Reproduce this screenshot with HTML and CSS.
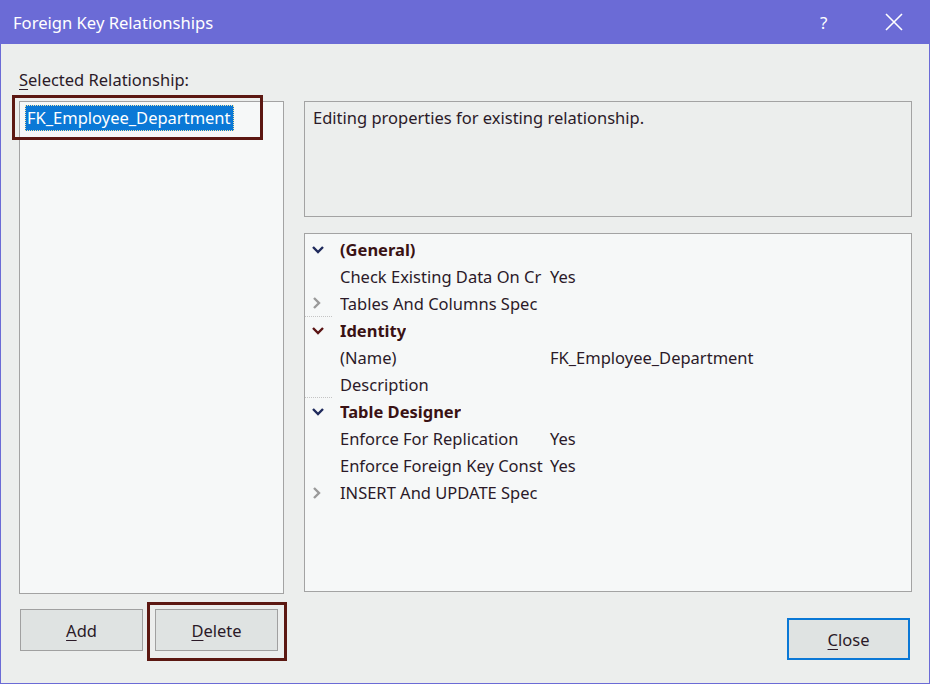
FILE: index.html
```html
<!DOCTYPE html>
<html>
<head>
<meta charset="utf-8">
<link rel="stylesheet" href="styles.css">
</head>
<body>
<div class="window">
  <div class="titlebar">
    <span class="title">Foreign Key Relationships</span>
    <span class="help">?</span>
    <span class="close-x">
      <svg width="18" height="18" viewBox="0 0 18 18"><path d="M1 1 L17 17 M17 1 L1 17" stroke="#fff" stroke-width="1.6" fill="none"/></svg>
    </span>
  </div>
  <div class="content">
    <div class="label"><u>S</u>elected Relationship:</div>
    <div class="spacer"></div>

    <div class="listbox">
      <div class="item selected">FK_Employee_Department</div>
    </div>
    <div class="right">
      <div class="desc">Editing properties for existing relationship.</div>
      <div class="grid">
        <div class="row cat"><span class="gut"><svg class="chev" width="14" height="10" viewBox="0 0 14 10"><path d="M2 2 L7 7 L12 2" stroke="#1f2a5c" stroke-width="2.4" fill="none"/></svg></span><span class="name">(General)</span></div>
        <div class="row"><span class="gut"></span><span class="name">Check Existing Data On Cr</span><span class="val">Yes</span></div>
        <div class="row"><span class="gut sep"><svg class="chev" width="10" height="14" viewBox="0 0 10 14"><path d="M3 2 L8 7 L3 12" stroke="#9a9a9a" stroke-width="2.4" fill="none"/></svg></span><span class="name">Tables And Columns Spec</span><span class="val"></span></div>
        <div class="row cat"><span class="gut"><svg class="chev" width="14" height="10" viewBox="0 0 14 10"><path d="M2 2 L7 7 L12 2" stroke="#5a1414" stroke-width="2.4" fill="none"/></svg></span><span class="name">Identity</span></div>
        <div class="row"><span class="gut"></span><span class="name">(Name)</span><span class="val">FK_Employee_Department</span></div>
        <div class="row"><span class="gut sep"></span><span class="name">Description</span><span class="val"></span></div>
        <div class="row cat"><span class="gut"><svg class="chev" width="14" height="10" viewBox="0 0 14 10"><path d="M2 2 L7 7 L12 2" stroke="#1f2a5c" stroke-width="2.4" fill="none"/></svg></span><span class="name">Table Designer</span></div>
        <div class="row"><span class="gut"></span><span class="name">Enforce For Replication</span><span class="val">Yes</span></div>
        <div class="row"><span class="gut"></span><span class="name">Enforce Foreign Key Const</span><span class="val">Yes</span></div>
        <div class="row"><span class="gut"><svg class="chev" width="10" height="14" viewBox="0 0 10 14"><path d="M3 2 L8 7 L3 12" stroke="#9a9a9a" stroke-width="2.4" fill="none"/></svg></span><span class="name">INSERT And UPDATE Spec</span><span class="val"></span></div>
      </div>
    </div>

    <div class="buttons">
      <button class="btn"><u>A</u>dd</button>
      <button class="btn"><u>D</u>elete</button>
    </div>
    <div class="close-row">
      <button class="btn default"><u>C</u>lose</button>
    </div>
  </div>
  <div class="mark mark-list"></div>
  <div class="mark mark-delete"></div>
</div>
</body>
</html>
```
FILE: styles.css
```css
* { box-sizing: border-box; }
html, body { margin: 0; padding: 0; }
body {
  width: 930px;
  height: 684px;
  font-family: "Noto Sans", "Open Sans", sans-serif;
  font-size: 16.5px;
  color: #2b1a28;
  background: #eceeed;
  overflow: hidden;
}
.window {
  position: relative;
  width: 930px;
  height: 684px;
  border: 1px solid #6b6bd6;
  border-top: none;
  background: #eceeed;
}
.titlebar {
  height: 44px;
  margin: 0 -1px;
  background: #6b6bd6;
  color: #fff;
  display: flex;
  align-items: center;
  padding-left: 13px;
  font-size: 16.6px;
}
.title { flex: 1; }
.help { width: 22px; margin-right: 43px; font-size: 17px; }
.close-x { width: 18px; height: 18px; margin-right: 27px; display: flex; }
.content {
  display: grid;
  grid-template-columns: 265px 608px;
  grid-template-rows: 57px 493px auto;
  column-gap: 20px;
  padding-left: 18px;
}
.label {
  padding-top: 26px;
  line-height: 20px;
}
u { text-decoration-thickness: 1px; text-underline-offset: 3px; }
.listbox {
  border: 1px solid #a3a3a3;
  background: #f6f8f8;
  padding: 3px 5px;
}
.item {
  display: inline-block;
  height: 26px;
  line-height: 25px;
  padding: 0 3px 0 2px;
}
.item.selected {
  background: #0a78d6;
  color: #fff;
  outline: 1px dotted #f3e6a8;
  outline-offset: -1px;
}
.right {
  display: flex;
  flex-direction: column;
  gap: 16px;
}
.desc {
  height: 116px;
  border: 1px solid #a3a3a3;
  background: #eceeed;
  padding: 4px 8px;
  line-height: 24px;
}
.grid {
  height: 359px;
  border: 1px solid #a3a3a3;
  background: #f6f8f8;
  padding-top: 2px;
}
.row {
  display: flex;
  height: 27px;
  line-height: 27px;
}
.gut {
  width: 35px;
  flex: none;
  display: flex;
  align-items: center;
  justify-content: flex-start;
  padding-left: 6px;
}
.gut.sep { border-bottom: 1px dotted #c4c4c4; width: 27px; margin-right: 8px; }
.chev { display: block; }
.name {
  width: 210px;
  flex: none;
  white-space: nowrap;
  overflow: hidden;
}
.val { white-space: nowrap; }
.cat .name { font-weight: 700; color: #3a1214; width: auto; }
.buttons {
  display: flex;
  gap: 12px;
  padding-left: 1px;
  padding-top: 15px;
}
.btn {
  width: 123px;
  height: 42px;
  border: 1px solid #a0a0a0;
  background: #dfe3e2;
  font-family: "Noto Sans", "Open Sans", sans-serif;
  font-size: 16.5px;
  color: #2b1a28;
  padding: 0;
}
.btn.default { border: 2px solid #0a78d6; }
.close-row {
  display: flex;
  justify-content: flex-end;
  padding-top: 24px;
  padding-right: 2px;
}
.mark {
  position: absolute;
  border: 3px solid #5c1812;
}
.mark-list { left: 11px; top: 95px; width: 251px; height: 45px; }
.mark-delete { left: 146px; top: 602px; width: 140px; height: 59px; }
```
